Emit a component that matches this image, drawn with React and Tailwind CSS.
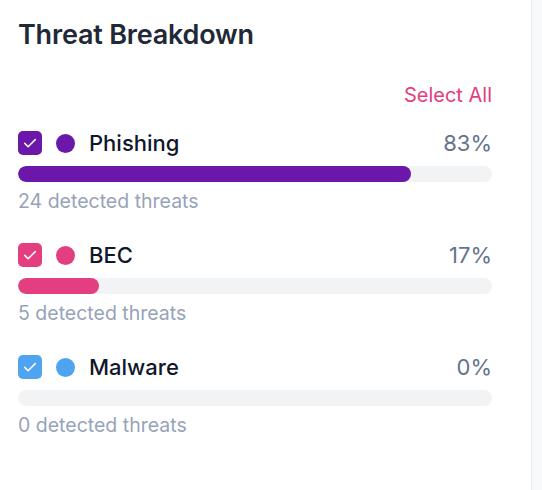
import React from "react";

const threats = [
  { name: "Phishing", pct: 83, count: 24, color: "bg-[#6b17aa]" },
  { name: "BEC", pct: 17, count: 5, color: "bg-[#e33e80]" },
  { name: "Malware", pct: 0, count: 0, color: "bg-[#4ea4f1]" },
];

function Check() {
  return (
    <svg viewBox="0 0 24 24" className="w-[18px] h-[18px]" fill="none" stroke="white" strokeWidth="2" strokeLinecap="round" strokeLinejoin="round">
      <path d="M5 12.5l4.5 4.5L19 7.5" />
    </svg>
  );
}

export default function App() {
  return (
    <div className="w-[542px] h-[490px] flex bg-[#f8f9fb]" style={{ fontFamily: "Inter, 'Noto Sans', sans-serif" }}>
      <div className="w-[532px] h-full bg-white border-r border-[#e8eaee] pl-[18px] pr-[39px] pt-[18px]">
        {/* Title */}
        <h2 className="text-[27px] leading-[34px] font-semibold text-[#1f2937] tracking-[-0.2px]">Threat Breakdown</h2>

        <div className="flex justify-end mt-[29px]">
          <button className="text-[20px] leading-[28px] text-[#e33e80]">Select All</button>
        </div>

        <div className="mt-[22px] flex flex-col gap-[30px]">
          {threats.map((t) => (
            <div key={t.name}>
              <div className="flex items-center h-[24px]">
                <div className={`w-[24px] h-[24px] rounded-[5px] flex items-center justify-center ${t.color}`}>
                  <Check />
                </div>
                <span className={`ml-[14px] w-[19px] h-[19px] rounded-full ${t.color}`} />
                <span className="ml-[14px] text-[22px] font-medium text-[#0f172a]">{t.name}</span>
                <span className="ml-auto text-[22px] text-[#64748b]">{t.pct}%</span>
              </div>
              <div className="mt-[11px] h-[16px] rounded-full bg-[#f2f3f5] overflow-hidden">
                <div className={`h-full rounded-full ${t.color}`} style={{ width: `${t.pct}%` }} />
              </div>
              <div className="mt-[7px] text-[19.5px] leading-[24px] text-[#97a3b8]">{t.count} detected threats</div>
            </div>
          ))}
        </div>
      </div>
    </div>
  );
}
